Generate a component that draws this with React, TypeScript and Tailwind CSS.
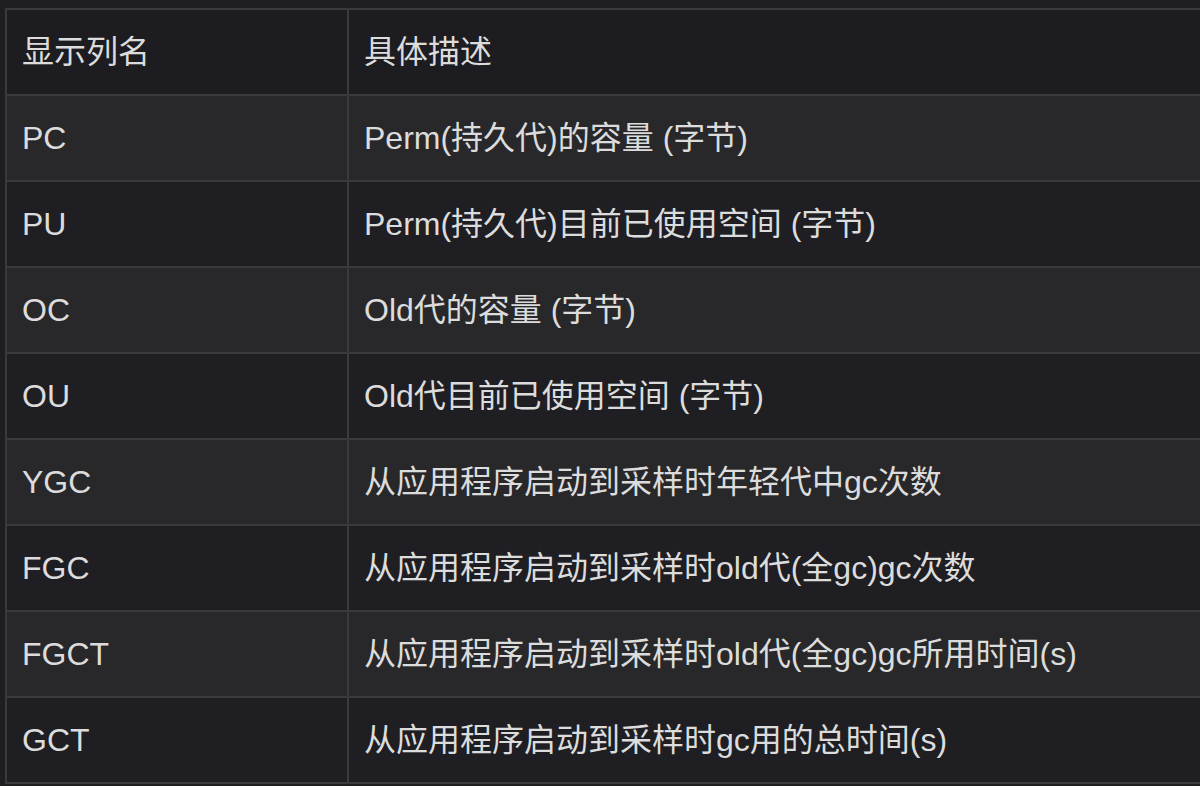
import React from "react";

const rows: [string, string][] = [
  ["PC", "Perm(持久代)的容量 (字节)"],
  ["PU", "Perm(持久代)目前已使用空间 (字节)"],
  ["OC", "Old代的容量 (字节)"],
  ["OU", "Old代目前已使用空间 (字节)"],
  ["YGC", "从应用程序启动到采样时年轻代中gc次数"],
  ["FGC", "从应用程序启动到采样时old代(全gc)gc次数"],
  ["FGCT", "从应用程序启动到采样时old代(全gc)gc所用时间(s)"],
  ["GCT", "从应用程序启动到采样时gc用的总时间(s)"],
];

export default function App() {
  return (
    <div
      className="w-[1200px] h-[786px] overflow-hidden bg-[#1d1d22] pl-[5px] pt-[8px] text-[#dcdcdc]"
      style={{ fontFamily: '"Liberation Sans", "Noto Sans CJK SC", sans-serif' }}
    >
      <table className="w-[1220px] border-collapse text-[32px] leading-none">
        <thead>
          <tr className="bg-[#1c1c21]">
            <th className="h-[86px] w-[342px] border-2 border-[#3a3a3e] pl-[15px] text-left font-normal">显示列名</th>
            <th className="h-[86px] border-2 border-[#3a3a3e] pl-[15px] text-left font-normal">具体描述</th>
          </tr>
        </thead>
        <tbody>
          {rows.map(([a, b], i) => (
            <tr key={a} className={i % 2 === 0 ? "bg-[#28282a]" : "bg-[#1e1e23]"}>
              <td className="h-[86px] border-2 border-[#3a3a3e] pl-[15px]">{a}</td>
              <td className="h-[86px] border-2 border-[#3a3a3e] pl-[15px]">{b}</td>
            </tr>
          ))}
        </tbody>
      </table>
    </div>
  );
}
